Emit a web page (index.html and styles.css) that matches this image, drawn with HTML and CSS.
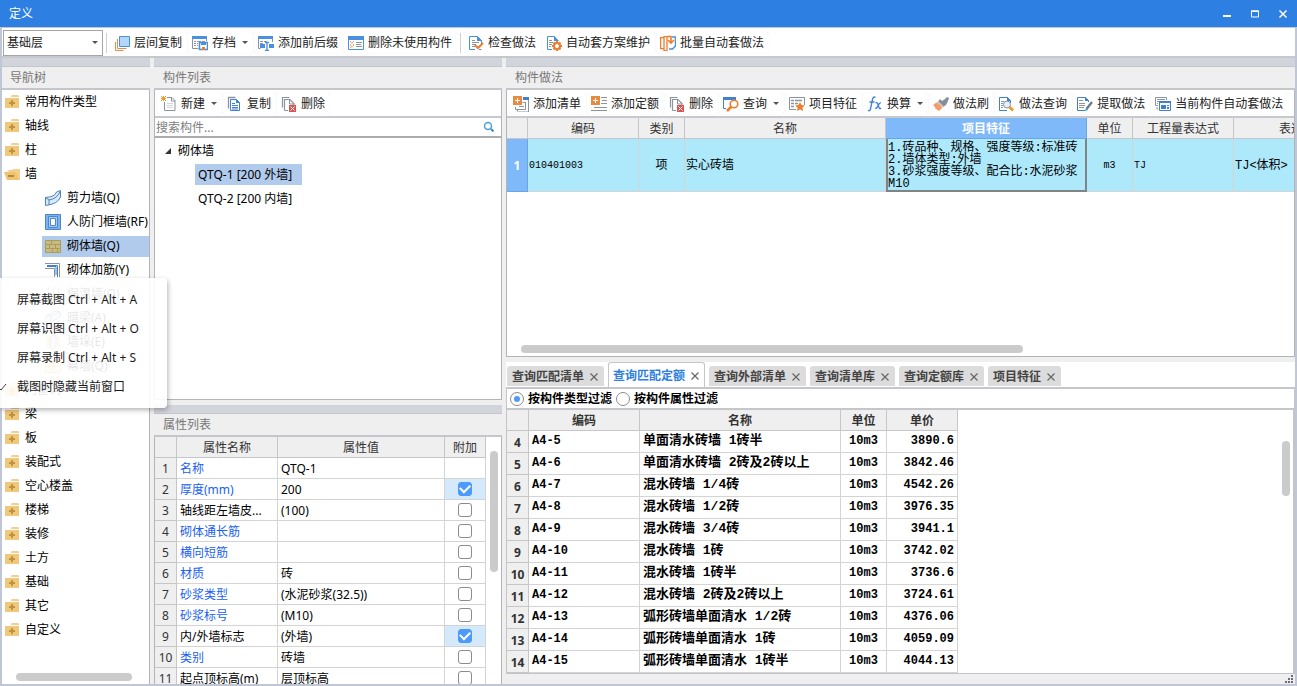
FILE: index.html
```html
<!DOCTYPE html>
<html lang="zh-CN">
<head>
<meta charset="utf-8">
<meta name="viewport" content="width=device-width, initial-scale=1">
<title>定义</title>
<link rel="stylesheet" href="styles.css">
</head>
<body>
<svg class="sprite" aria-hidden="true">
  <symbol id="i-folder" viewBox="0 0 16 16"><path d="M8 1h6l1 1v1H7V2z" fill="#f2cf90"/><path d="M1 4h14v10H1z" fill="#f0c87c"/><path d="M7 6h2v2h2v2H9v2H7v-2H5V8h2z" fill="#bf933f"/></symbol>
  <symbol id="i-open" viewBox="0 0 16 16"><path d="M3 4h5l1-1h7v11h-2z" fill="#f3d08f"/><path d="M0 6h12l3 8H3z" fill="#f0c273"/><path d="M4 9h6v2H4z" fill="#b98a35"/></symbol>
  <symbol id="i-copyfloor" viewBox="0 0 16 16"><path d="M5.5 1.500h10v10h-10z" fill="#b5d6fb" stroke="#4a8fe0"/><path d="M3.500 4v9.500h9M1.500 7v8.500h8" fill="none" stroke="#ec8b4a"/></symbol>
  <symbol id="i-archive" viewBox="0 0 16 16"><path d="M0 1h15v3H0z" fill="#4a8fe0"/><path d="M.5 4v9.500h6M14.500 4v2M2 6.500h2m1 0h4m1 0h3M2 8.500h2m1 0h1M2 10.500h2m1 0h1" fill="none" stroke="#8b949e"/><path d="M7.500 7.500h8v7h-8z" fill="#fff" stroke="#4a8fe0" stroke-width="1.500"/><path d="M9 7h5v3H9z" fill="#4a8fe0"/><path d="M10 12h3v3h-3z" fill="#ee7d2e"/></symbol>
  <symbol id="i-affix" viewBox="0 0 16 16"><path d="M0 1h15v3H0z" fill="#4a8fe0"/><path d="M.5 4v9.500h2M14.500 4v3M2 6.500h3m1 0h3M2 8.500h3" fill="none" stroke="#8b949e"/><path d="M2 9h5v4H2zm9 0h5v4h-5z" fill="#4a8fe0"/><path d="M7 7.500h4M9 8v7M7 15.500h4" fill="none" stroke="#4a8fe0" stroke-width="1.300"/></symbol>
  <symbol id="i-unused" viewBox="0 0 16 16"><path d="M.5 1.500h15v13H.5z" fill="#fff" stroke="#4a8fe0"/><path d="M0 1h16v4H0z" fill="#4a8fe0"/><path d="m2 6 4 4m0-4-4 4m0 0 3 3m1-3-4 3" stroke="#ee7d2e" stroke-dasharray="1 1"/><path d="M8 7.500h6m-6 2h5m-5 2h6" stroke="#8b949e"/></symbol>
  <symbol id="i-check" viewBox="0 0 16 16"><path d="M7 14.500H1.500v-13h8l4 4V9M11 14.500h2.500" fill="#fff" stroke="#4a8fe0"/><path d="M9 1v5h5z" fill="#4a8fe0"/><path d="M4 5.500h3m-3 2h7m-7 2h4m-4 2h3" stroke="#8b949e"/><path d="m7 10 3 3 5-5" fill="none" stroke="#ee7d2e" stroke-width="2"/></symbol>
  <symbol id="i-gear" viewBox="0 0 16 16"><path d="M6 14.500H1.500v-13h7l3 4" fill="#fff" stroke="#4a8fe0"/><path d="M8 1v5h5z" fill="#4a8fe0"/><path d="M3 5.500h3m-3 2h4m-4 2h3m-3 2h2" stroke="#8b949e"/><circle cx="11" cy="11" r="3" fill="#fff" stroke="#ee7d2e" stroke-width="2"/><path d="M11 6v2m0 6v2m-5-5h2m6 0h2M7.500 7.500l1 1m6-1-1 1m-6 6 1-1m6 1-1-1" stroke="#ee7d2e" stroke-width="2"/></symbol>
  <symbol id="i-batch" viewBox="0 0 16 16"><path d="M12 2h3.500v9l-3 3H9" fill="none" stroke="#4a8fe0" stroke-width="1.500"/><path d="M.6 2.600H4v11H.6zM4 1.600h3v14H4z" fill="#fff" stroke="#ee7d2e" stroke-width="1.300"/><path d="M7 1.500h4V7M8 5l3 3 3-3" fill="none" stroke="#ee7d2e" stroke-width="1.600"/></symbol>
  <symbol id="i-new" viewBox="0 0 16 16"><path d="M6 1.500h5l3 3v10H3.500V6" fill="#fff" stroke="#8b949e"/><path d="M10.500 1.500V5H14" fill="none" stroke="#8b949e"/><path d="M6 7.500h6m-6 2h6m-6 2h6" stroke="#d3d6da"/><path d="m0 0 5 5M5 0 0 5M2.500 0v5M0 2.500h5" stroke="#f09a2c"/></symbol>
  <symbol id="i-copy" viewBox="0 0 16 16"><path d="M1.500 12.500v-11h7" fill="none" stroke="#8b949e" stroke-width="1.300"/><path d="M3.500 3.500h6l3 3v8h-9z" fill="#fff" stroke="#3f80d4"/><path d="M9 3v4h4z" fill="#3f80d4"/><path d="M5 7.500h3m-3 2h6m-6 2h6m-6 1.500h6" stroke="#3f80d4"/></symbol>
  <symbol id="i-delete" viewBox="0 0 16 16"><path d="M1.500 11.500v-10h7M3.500 14.500v-11H9l4 4V9M3.500 14.500H7" fill="none" stroke="#8b949e" stroke-width="1.200"/><path d="M8.500 3.500V8H13" fill="none" stroke="#8b949e"/><path d="M8 9h7v7H8z" fill="#d9534f"/><path d="m9.500 10.500 4 4m0-4-4 4" stroke="#fff"/></symbol>
  <symbol id="i-addlist" viewBox="0 0 16 16"><path d="M10 1h6v3h-6z" fill="#3f80d4"/><path d="M15.500 4v12H5M12.500 6v7.500h-10V11M4.500 13v2.500M9.500 6.500h3M6 10.500h5" fill="none" stroke="#8b949e"/><path d="M0 0h9v9H0z" fill="#e88b42"/><path d="M4.500 2v5M2 4.500h5" stroke="#fff"/></symbol>
  <symbol id="i-addquota" viewBox="0 0 16 16"><path d="M10 1.500h6M11 4.500h5M10 7.500h6M3 11.500h13M0 14.500h16" stroke="#8b949e"/><path d="M0 0h9v9H0z" fill="#e88b42"/><path d="M4.500 2v5M2 4.500h5" stroke="#fff"/></symbol>
  <symbol id="i-query" viewBox="0 0 16 16"><path d="M0 1h13v3H0z" fill="#3f80d4"/><path d="M.5 4v8.500H3M12.500 3v2" fill="none" stroke="#3f80d4"/><circle cx="11" cy="8" r="3.800" fill="#fff" stroke="#ee7d2e" stroke-width="1.600"/><path d="m8.500 10.500-4.500 4.500" stroke="#ee7d2e" stroke-width="2.600"/></symbol>
  <symbol id="i-feature" viewBox="0 0 16 16"><path d="M7 13.500H.5v-12h15V9" fill="#fff" stroke="#8b949e"/><path d="M2 4.500h3m1 0h7M2 7.500h3m1 0h3M2 10.500h3" stroke="#8b949e" stroke-width="1.500"/><path d="m11 6 1.500 3 3.300.5-2.400 2.300.6 3.300-3-1.600-3 1.600.6-3.300L6.200 9.500 9.500 9z" fill="#ee7d2e"/></symbol>
  <symbol id="i-fx" viewBox="0 0 16 16"><path d="M8.500 1.500Q6.500 0 5.600 3L3.600 12.500Q3 15.500 1 14.500M2.500 6h5M8.500 7q1.800-1 2.500 1.500l1 3q.5 2 2 .5M14 7q-1.500-.5-2.500 2l-1 1.500Q9.500 13 8 12" fill="none" stroke="#3f80d4" stroke-width="1.300"/></symbol>
  <symbol id="i-brush" viewBox="0 0 16 16"><path d="m12 3 2-2 2 1-1 3-2 4-3 2-5-5 2-3 2 2z" fill="#858f98"/><path d="m5 5 5.500 5-1.500 1.500L3.500 7z" fill="#d6c4ba"/><path d="m3.500 6.500 6 5L6 15l-2-1.500L2.500 13 2 11 0 9z" fill="#f99a69"/></symbol>
  <symbol id="i-docquery" viewBox="0 0 16 16"><path d="M8 14.500H.5v-13h8l3 3V7" fill="#fff" stroke="#3f80d4"/><path d="M8 1v4h4z" fill="#3f80d4"/><path d="M2 5.500h3m-3 2h2m-2 2h2m-2 2h2" stroke="#8b949e"/><circle cx="8" cy="8.500" r="3.500" fill="#e6f0fb" stroke="#8b949e"/><path d="m10.500 11 3.500 3.500" stroke="#f09a2c" stroke-width="3"/></symbol>
  <symbol id="i-extract" viewBox="0 0 16 16"><path d="M8 14.500H.5v-13h8l3 3V6" fill="#fff" stroke="#3f80d4"/><path d="M8 1v4h4z" fill="#3f80d4"/><path d="M2 4.500h4m-4 3h6m-6 2h6m-6 2h5" stroke="#8b949e"/><path d="m15 6-5.500 7" stroke="#6f7a84" stroke-width="2.400"/><path d="m9 12-1 3 3-1" fill="#2ba6b8"/></symbol>
  <symbol id="i-auto" viewBox="0 0 16 16"><path d="M.5 9.500v-8h11V4M.5 9.500H3M2 3.500h8M2 5.500h2M2 7.500h1M2 11v2h1" fill="none" stroke="#8b949e"/><path d="M4.500 5.500h11v9h-11z" fill="#fff" stroke="#3f80d4"/><path d="M4 5h12v2H4z" fill="#3f80d4"/><path d="M6 9h5v4H6zm6 0h2v1h-2zm0 2h2v2h-2z" fill="#3f80d4"/></symbol>
  <symbol id="i-shear" viewBox="0 0 16 16"><path d="M.5 7.500Q10 7 11.500 2L15.500.5V7Q13 14 .5 15.500z" fill="#d9e9fb" stroke="#4c83bd"/><path d="M.5 7.500 4 10q8-1 11.500-9M4 10v5" fill="none" stroke="#4c83bd"/></symbol>
  <symbol id="i-frame" viewBox="0 0 16 16"><path d="M.5.5h15v15H.5z" fill="#7db1f0" stroke="#4a86cf"/><path d="M3.500 2.500h9v11h-9z" fill="#a9cdf8" stroke="#4a86cf"/><path d="M5.500 4.500h5v7h-5z" fill="#fff" stroke="#4a86cf"/></symbol>
  <symbol id="i-brick" viewBox="0 0 16 16"><path d="M.5 2.500h15v12H.5zM.5 6.500h15M.5 10.500h15M6.500 2.500v4m4 0v4m-6-4v4m3 0v4m5-4v4" fill="#c3bb8e" stroke="#b39c45"/></symbol>
  <symbol id="i-rebar" viewBox="0 0 16 16"><path d="M0 1.500h14.500V15M0 6.500h9.500V15" fill="none" stroke="#8b949e"/><path d="M2 3.500h10.500V15M2 4.500h9V13" fill="none" stroke="#3f80d4"/></symbol>
  <symbol id="i-insul" viewBox="0 0 16 16"><path d="M3.500 1v14M8.500 1v14M13.500 1v14" stroke="#3f80d4" stroke-dasharray="3 1"/><path d="M0 10.500h16" stroke="#3f80d4"/></symbol>
  <symbol id="i-beam" viewBox="0 0 16 16"><path d="m1 6 9-5 5 1v5l-9 5-1 3H1zM1 6h5v5M6 6l9-4" fill="#d9e9fb" stroke="#4c83bd"/></symbol>
  <symbol id="i-pier" viewBox="0 0 16 16"><path d="M1 3h4v10H1zm11 0h3v10h-3z" fill="#f3c565"/><path d="M5.500 3.500 8 1.500h3v10L8.500 14h-3z" fill="#d9e9fb" stroke="#4c83bd"/></symbol>
  <symbol id="i-curtain" viewBox="0 0 16 16"><path d="M.5 2.500h15v12H.5zM.5 8.500h15M8.500 2.500v6m-3 0v6" fill="#fde8ba" stroke="#eca63d"/></symbol>
  <symbol id="i-search" viewBox="0 0 12 12"><circle cx="5" cy="5" r="3.500" fill="none" stroke="#4da0d4" stroke-width="1.500"/><path d="m8 8 2.500 2.500" stroke="#3889c4" stroke-width="2"/></symbol>
  <symbol id="i-x" viewBox="0 0 10 10"><path d="m1.500 1.500 7 7m0-7-7 7" stroke="#666" stroke-width="1.200"/></symbol>
</svg>

<header class="titlebar">
  <h1>定义</h1>
  <div class="winbtns">
    <button aria-label="最小化"><svg viewBox="0 0 10 10"><path d="M1 6h8v2H1z" fill="#fff"/></svg></button>
    <button aria-label="最大化"><svg viewBox="0 0 10 10"><path d="M1.500 2h7v6h-7z" fill="none" stroke="#fff"/><path d="M1 1.500h8v1.500H1z" fill="#fff"/></svg></button>
    <button aria-label="关闭"><svg viewBox="0 0 10 10"><path d="m1.500 1.500 7 7m0-7-7 7" stroke="#fff" stroke-width="1.500"/></svg></button>
  </div>
</header>

<div class="frame">
  <div class="toolbar main-toolbar">
    <div class="floor"><select aria-label="楼层"><option>基础层</option></select><i class="caret"></i></div>
    <i class="sep"></i>
    <button><svg><use href="#i-copyfloor"/></svg>层间复制</button>
    <button><svg><use href="#i-archive"/></svg>存档<i class="caret"></i></button>
    <button><svg><use href="#i-affix"/></svg>添加前后缀</button>
    <button><svg><use href="#i-unused"/></svg>删除未使用构件</button>
    <i class="sep"></i>
    <button><svg><use href="#i-check"/></svg>检查做法</button>
    <button><svg><use href="#i-gear"/></svg>自动套方案维护</button>
    <button><svg><use href="#i-batch"/></svg>批量自动套做法</button>
  </div>

  <main class="workspace">
    <nav class="panel nav">
      <div class="grip"></div>
      <h2>导航树</h2>
      <div class="box">
        <ul class="tree">
          <li><svg><use href="#i-folder"/></svg>常用构件类型</li>
          <li><svg><use href="#i-folder"/></svg>轴线</li>
          <li><svg><use href="#i-folder"/></svg>柱</li>
          <li><svg><use href="#i-open"/></svg>墙</li>
          <li class="sub"><span><svg><use href="#i-shear"/></svg>剪力墙(Q)</span></li>
          <li class="sub"><span><svg><use href="#i-frame"/></svg>人防门框墙(RF)</span></li>
          <li class="sub on"><span><svg><use href="#i-brick"/></svg>砌体墙(Q)</span></li>
          <li class="sub"><span><svg><use href="#i-rebar"/></svg>砌体加筋(Y)</span></li>
          <li class="sub"><span><svg><use href="#i-insul"/></svg>保温墙(Q)</span></li>
          <li class="sub"><span><svg><use href="#i-beam"/></svg>暗梁(A)</span></li>
          <li class="sub"><span><svg><use href="#i-pier"/></svg>墙垛(E)</span></li>
          <li class="sub"><span><svg><use href="#i-curtain"/></svg>幕墙(Q)</span></li>
          <li><svg><use href="#i-folder"/></svg>门窗洞</li>
          <li><svg><use href="#i-folder"/></svg>梁</li>
          <li><svg><use href="#i-folder"/></svg>板</li>
          <li><svg><use href="#i-folder"/></svg>装配式</li>
          <li><svg><use href="#i-folder"/></svg>空心楼盖</li>
          <li><svg><use href="#i-folder"/></svg>楼梯</li>
          <li><svg><use href="#i-folder"/></svg>装修</li>
          <li><svg><use href="#i-folder"/></svg>土方</li>
          <li><svg><use href="#i-folder"/></svg>基础</li>
          <li><svg><use href="#i-folder"/></svg>其它</li>
          <li><svg><use href="#i-folder"/></svg>自定义</li>
        </ul>
        <div class="hbar"><i></i></div>
      </div>
    </nav>

    <div class="middle">
      <section class="panel list">
        <div class="grip"></div>
        <h2>构件列表</h2>
        <div class="box">
          <div class="toolbar">
            <button><svg><use href="#i-new"/></svg>新建<i class="caret"></i></button>
            <button><svg><use href="#i-copy"/></svg>复制</button>
            <button><svg><use href="#i-delete"/></svg>删除</button>
          </div>
          <div class="search"><input type="text" aria-label="搜索构件" placeholder="搜索构件..."><svg><use href="#i-search"/></svg></div>
          <ul class="members">
            <li class="root"><i class="tri"></i>砌体墙</li>
            <li class="on"><span>QTQ-1 [200 外墙]</span></li>
            <li><span>QTQ-2 [200 内墙]</span></li>
          </ul>
        </div>
      </section>

      <section class="panel props">
        <div class="grip"></div>
        <h2>属性列表</h2>
        <div class="box">
          <table class="grid prop-grid">
            <colgroup><col class="w22"><col class="w101"><col class="w167"><col class="w41"></colgroup>
            <thead><tr><th></th><th>属性名称</th><th>属性值</th><th>附加</th></tr></thead>
            <tbody>
              <tr><th>1</th><td class="blue">名称</td><td>QTQ-1</td><td></td></tr>
              <tr><th>2</th><td class="blue">厚度(mm)</td><td>200</td><td class="tick"><input type="checkbox" aria-label="厚度 附加" checked></td></tr>
              <tr><th>3</th><td>轴线距左墙皮...</td><td>(100)</td><td><input type="checkbox" aria-label="轴线距左墙皮 附加"></td></tr>
              <tr><th>4</th><td class="blue">砌体通长筋</td><td></td><td><input type="checkbox" aria-label="砌体通长筋 附加"></td></tr>
              <tr><th>5</th><td class="blue">横向短筋</td><td></td><td><input type="checkbox" aria-label="横向短筋 附加"></td></tr>
              <tr><th>6</th><td class="blue">材质</td><td>砖</td><td><input type="checkbox" aria-label="材质 附加"></td></tr>
              <tr><th>7</th><td class="blue">砂浆类型</td><td>(水泥砂浆(32.5))</td><td><input type="checkbox" aria-label="砂浆类型 附加"></td></tr>
              <tr><th>8</th><td class="blue">砂浆标号</td><td>(M10)</td><td><input type="checkbox" aria-label="砂浆标号 附加"></td></tr>
              <tr><th>9</th><td>内/外墙标志</td><td>(外墙)</td><td class="tick"><input type="checkbox" aria-label="内/外墙标志 附加" checked></td></tr>
              <tr><th>10</th><td class="blue">类别</td><td>砖墙</td><td><input type="checkbox" aria-label="类别 附加"></td></tr>
              <tr><th>11</th><td>起点顶标高(m)</td><td>层顶标高</td><td><input type="checkbox" aria-label="起点顶标高 附加"></td></tr>
            </tbody>
          </table>
          <div class="vbar"><i></i></div>
        </div>
      </section>
    </div>

    <div class="right">
      <section class="panel methods">
        <div class="grip"></div>
        <h2>构件做法</h2>
        <div class="box">
          <div class="toolbar">
            <button><svg><use href="#i-addlist"/></svg>添加清单</button>
            <button><svg><use href="#i-addquota"/></svg>添加定额</button>
            <button><svg><use href="#i-delete"/></svg>删除</button>
            <button><svg><use href="#i-query"/></svg>查询<i class="caret"></i></button>
            <button><svg><use href="#i-feature"/></svg>项目特征</button>
            <button><svg><use href="#i-fx"/></svg>换算<i class="caret"></i></button>
            <button><svg><use href="#i-brush"/></svg>做法刷</button>
            <button><svg><use href="#i-docquery"/></svg>做法查询</button>
            <button><svg><use href="#i-extract"/></svg>提取做法</button>
            <button><svg><use href="#i-auto"/></svg>当前构件自动套做法</button>
          </div>
          <div class="sheet">
            <table class="grid method-grid">
              <colgroup><col class="w21"><col class="w111"><col class="w46"><col class="w201"><col class="w201"><col class="w46"><col class="w101"><col class="w151"></colgroup>
              <thead><tr><th></th><th>编码</th><th>类别</th><th>名称</th><th class="cur">项目特征</th><th>单位</th><th>工程量表达式</th><th>表达式说明</th></tr></thead>
              <tbody><tr><th>1</th><td class="code">010401003</td><td class="mid">项</td><td>实心砖墙</td><td class="feature">1.砖品种、规格、强度等级:标准砖<br>2.墙体类型:外墙<br>3.砂浆强度等级、配合比:水泥砂浆<br>M10</td><td class="mid code">m3</td><td class="code">TJ</td><td>TJ&lt;体积&gt;</td></tr></tbody>
            </table>
          </div>
          <div class="hbar"><i></i></div>
        </div>
      </section>

      <section class="lookup">
        <div class="tabs" role="tablist">
          <button role="tab">查询匹配清单<svg><use href="#i-x"/></svg></button>
          <button role="tab" class="on" aria-selected="true">查询匹配定额<svg><use href="#i-x"/></svg></button>
          <button role="tab">查询外部清单<svg><use href="#i-x"/></svg></button>
          <button role="tab">查询清单库<svg><use href="#i-x"/></svg></button>
          <button role="tab">查询定额库<svg><use href="#i-x"/></svg></button>
          <button role="tab">项目特征<svg><use href="#i-x"/></svg></button>
        </div>
        <div class="filters">
          <label><input type="radio" name="filter" checked>按构件类型过滤</label>
          <label><input type="radio" name="filter">按构件属性过滤</label>
        </div>
        <div class="quota">
          <table class="grid quota-grid">
            <colgroup><col class="w22"><col class="w111"><col class="w201"><col class="w46"><col class="w71"></colgroup>
            <thead><tr><th></th><th>编码</th><th>名称</th><th>单位</th><th>单价</th></tr></thead>
            <tbody>
              <tr><th>4</th><td>A4-5</td><td>单面清水砖墙 1砖半</td><td>10m3</td><td>3890.6</td></tr>
              <tr><th>5</th><td>A4-6</td><td>单面清水砖墙 2砖及2砖以上</td><td>10m3</td><td>3842.46</td></tr>
              <tr><th>6</th><td>A4-7</td><td>混水砖墙 1/4砖</td><td>10m3</td><td>4542.26</td></tr>
              <tr><th>7</th><td>A4-8</td><td>混水砖墙 1/2砖</td><td>10m3</td><td>3976.35</td></tr>
              <tr><th>8</th><td>A4-9</td><td>混水砖墙 3/4砖</td><td>10m3</td><td>3941.1</td></tr>
              <tr><th>9</th><td>A4-10</td><td>混水砖墙 1砖</td><td>10m3</td><td>3742.02</td></tr>
              <tr><th>10</th><td>A4-11</td><td>混水砖墙 1砖半</td><td>10m3</td><td>3736.6</td></tr>
              <tr><th>11</th><td>A4-12</td><td>混水砖墙 2砖及2砖以上</td><td>10m3</td><td>3724.61</td></tr>
              <tr><th>12</th><td>A4-13</td><td>弧形砖墙单面清水 1/2砖</td><td>10m3</td><td>4376.06</td></tr>
              <tr><th>13</th><td>A4-14</td><td>弧形砖墙单面清水 1砖</td><td>10m3</td><td>4059.09</td></tr>
              <tr><th>14</th><td>A4-15</td><td>弧形砖墙单面清水 1砖半</td><td>10m3</td><td>4044.13</td></tr>
            </tbody>
          </table>
          <div class="vbar"><i></i></div>
        </div>
        <div class="status"><svg viewBox="0 0 9 9"><path d="M6 0h2v2H6zM3 3h2v2H3zm3 0h2v2H6zM0 6h2v2H0zm3 0h2v2H3zm3 0h2v2H6z" fill="#6b6b76"/></svg></div>
      </section>
    </div>
  </main>
</div>

<ul class="popup" role="menu">
  <li role="menuitem">屏幕截图 Ctrl + Alt + A</li>
  <li role="menuitem">屏幕识图 Ctrl + Alt + O</li>
  <li role="menuitem">屏幕录制 Ctrl + Alt + S</li>
  <li role="menuitemcheckbox" aria-checked="true"><svg viewBox="0 0 8 8"><path d="M0 6 1 7 6 1" fill="none" stroke="#444"/></svg>截图时隐藏当前窗口</li>
</ul>
</body>
</html>
```

FILE: styles.css
```css
* { box-sizing: border-box; }
body {
  margin: 0;
  height: 100vh;
  display: flex;
  flex-direction: column;
  overflow: hidden;
  background: #efefef;
  color: #000;
  font: 12px/16px "Noto Sans", "Noto Sans CJK SC", sans-serif;
}
button, input, select { font: inherit; color: inherit; margin: 0; }
button { border: 0; background: none; padding: 0; }
ul { list-style: none; margin: 0; padding: 0; }
h1, h2 { margin: 0; font-size: 12px; font-weight: 400; }
.sprite { position: absolute; width: 0; height: 0; }

.titlebar {
  flex: none;
  height: 27px;
  display: flex;
  align-items: center;
  justify-content: space-between;
  padding: 0 9px;
  background: #2d7fe2;
  color: #fff;
}
.winbtns { display: flex; gap: 18px; }
.winbtns button { display: flex; }
.winbtns svg { width: 10px; height: 10px; }

.frame {
  flex: 1;
  min-height: 0;
  display: flex;
  flex-direction: column;
  border: solid #bfc7d6;
  border-width: 1px 2px 2px;
}
.toolbar {
  flex: none;
  display: flex;
  align-items: center;
  gap: 1px;
  height: 28px;
  padding: 1px 0 0 2px;
  background: #fff;
  border-bottom: 2px solid #c6c8cd;
  color: #222;
  white-space: nowrap;
}
.toolbar button {
  flex: none;
  height: 21px;
  display: flex;
  align-items: center;
  gap: 4px;
  padding: 0 5px 0 4px;
  border-radius: 3px;
  box-shadow: 0 0 1px #dcdcdc;
}
.toolbar svg { width: 16px; height: 16px; }
.caret {
  width: 6px;
  height: 3px;
  background: #555;
  clip-path: polygon(0 0, 100% 0, 50% 100%);
}
.toolbar button .caret { margin-left: 2px; }
.main-toolbar { height: 30px; padding-left: 1px; }
.sep { width: 1px; height: 20px; margin: 0 2px; background: #cfcfcf; }
.floor { display: grid; align-items: center; }
.floor select {
  grid-area: 1 / 1;
  width: 100px;
  height: 26px;
  padding: 0 3px;
  appearance: none;
  background: #fff;
  border: 1px solid #a5a5a5;
  border-radius: 0;
}
.floor .caret { grid-area: 1 / 1; justify-self: end; margin-right: 5px; }

.workspace { flex: 1; min-height: 0; display: flex; gap: 4px; }
.panel { display: flex; flex-direction: column; min-height: 0; }
.grip { flex: none; height: 8px; background: #d2d4dc; }
.panel h2 {
  flex: none;
  height: 24px;
  padding: 1px 9px 0;
  line-height: 19px;
  border: solid #c4c6cc;
  border-width: 1px 0 2px;
  background: #efefef;
  color: #777;
}
.box {
  flex: 1;
  min-height: 0;
  display: flex;
  flex-direction: column;
  background: #fff;
  border: solid #b4b4b8;
  border-width: 0 1px 1px;
  overflow: hidden;
}
.hbar, .vbar { flex: none; display: flex; }
.hbar i, .vbar i { display: block; border-radius: 4px; background: #cbcbcb; }
.hbar i { height: 8px; }
.vbar i { width: 8px; }

.nav { flex: 0 0 148px; }
.nav .box { border-left: 0; border-bottom: 0; }
.nav h2 { padding-left: 8px; }
.tree { flex: 1; min-height: 0; overflow: hidden; }
.tree li {
  height: 24px;
  display: flex;
  align-items: center;
  gap: 5px;
  padding-left: 2px;
  white-space: nowrap;
}
.tree svg { flex: none; width: 16px; height: 16px; }
.tree .sub { padding-left: 40px; }
.sub span {
  flex: 1;
  height: 21px;
  display: flex;
  align-items: center;
  gap: 6px;
  padding-left: 3px;
}
.sub.on span, .members .on span { background: #b1cbec; }
.nav .hbar { padding: 0 17px 3px 14px; }
.nav .hbar i { flex: 1; }

.middle { flex: 0 0 348px; display: flex; flex-direction: column; gap: 5px; }
.list { flex: 0 1 342px; }
.props { flex: 1 1 0; }
.search {
  flex: none;
  display: flex;
  align-items: center;
  height: 20px;
  border-bottom: 2px solid #adadb0;
  padding-right: 6px;
}
.search input { flex: 1; border: 0; padding: 0 1px; outline: 0; background: none; height: 18px; }
.search input::placeholder { color: #808080; opacity: 1; }
.search svg { width: 12px; height: 12px; }
.members li { height: 24px; display: flex; align-items: center; padding-left: 40px; }
.members span { line-height: 21px; min-width: 107px; padding: 0 3px; }
.members .root { padding: 2px 0 0 10px; gap: 7px; }
.tri { width: 6px; height: 6px; background: #333; clip-path: polygon(100% 0, 100% 100%, 0 100%); }

.grid { flex: none; table-layout: fixed; border-spacing: 0; width: 0; }
.grid th, .grid td {
  height: 21px;
  padding: 2px 3px 0;
  border: solid #d4d4d4;
  border-width: 0 1px 1px 0;
  line-height: 16px;
  text-align: left;
  white-space: nowrap;
  overflow: hidden;
}
.grid th {
  padding: 2px 0 0;
  text-align: center;
  font-weight: 400;
  background: #efefef;
  border-color: #c6c6c9;
  color: #333;
}
.w21 { width: 21px; }
.w22 { width: 22px; }
.w41 { width: 41px; }
.w46 { width: 46px; }
.w71 { width: 71px; }
.w101 { width: 101px; }
.w111 { width: 111px; }
.w151 { width: 151px; }
.w167 { width: 167px; }
.w201 { width: 201px; }

.props .box { flex-direction: row; border-bottom: 0; }
.prop-grid { align-self: flex-start; }
.prop-grid td:last-child { padding: 0; }
.grid .blue { color: #1a5ff0; }
.grid .tick { background: #d5e9fd; }
.props .vbar { flex: 1; justify-content: center; align-items: flex-start; padding: 14px 0 0 0; }
.props .vbar i { height: 121px; }
input[type="checkbox"], input[type="radio"] {
  appearance: none;
  display: grid;
  place-items: center;
  margin: 0 auto;
  width: 14px;
  height: 14px;
  background: #fff;
  border: 1px solid #8c8c8c;
  border-radius: 3px;
}
input[type="checkbox"]:checked { background: #4d9bf8; border-color: #4d9bf8; }
input[type="checkbox"]:checked::after {
  content: "";
  width: 8px;
  height: 5px;
  margin-bottom: 3px;
  border: solid #fff;
  border-width: 0 0 2px 2px;
  transform: rotate(-45deg);
}

.right { flex: 1; min-width: 0; display: flex; flex-direction: column; gap: 5px; }
.methods { flex: 1 1 0; }
.sheet { flex: 1; min-height: 0; overflow: hidden; }
.method-grid tbody th { background: #80b9fa; border-color: #6aa5e8; color: #fff; font-weight: 700; }
.method-grid td {
  height: 53px;
  padding: 2px 1px 0;
  background: #ade9fb;
  font-family: "Liberation Mono", "Noto Sans CJK SC", monospace;
}
.method-grid .code { font-size: 10px; }
.method-grid .mid { text-align: center; }
.method-grid .cur { background: #80b9fa; border-color: #6aa5e8; color: #fff; font-weight: 700; }
.method-grid .feature { padding: 2px 0 0; border: 2px solid #7f8487; border-top: 0; line-height: 12px; }
.methods .hbar { padding: 0 0 3px 14px; }
.methods .hbar i { width: 65%; }

.lookup { flex: none; display: flex; flex-direction: column; }
.tabs {
  display: flex;
  align-items: flex-end;
  gap: 4px;
  height: 27px;
  padding: 0 1px;
  background: #fff;
  border-bottom: 2px solid #c4c6cc;
}
.tabs button {
  height: 20px;
  margin-bottom: 1px;
  display: flex;
  align-items: center;
  gap: 5px;
  padding: 1px 5px 0;
  background: #dcdcdc;
  border-radius: 3px 3px 0 0;
  color: #444;
  font-weight: 700;
}
.tabs svg { width: 10px; height: 10px; }
.tabs .on {
  height: 25px;
  margin: 0;
  padding: 2px 4px 0;
  background: #fff;
  border: 1px solid #c4c6cc;
  border-bottom: 0;
  color: #2d7fe2;
}
.filters {
  display: flex;
  align-items: center;
  gap: 4px;
  height: 21px;
  padding-left: 3px;
  background: #fff;
  border: solid #c4c6cc;
  border-width: 0 1px 2px;
}
.filters label { display: flex; align-items: center; gap: 4px; font-weight: 700; }
.filters input { border-radius: 50%; }
.filters input[type="radio"]:checked::after { content: ""; width: 6px; height: 6px; border-radius: 50%; background: #4d9bf8; }
.quota {
  display: flex;
  justify-content: space-between;
  background: #fff;
  border: solid #c4c4c6;
  border-width: 0 2px 1px 1px;
}
.quota-grid thead th { font-weight: 700; }
.quota-grid tbody th { height: 22px; font-weight: 700; }
.quota-grid td {
  height: 22px;
  padding: 0 3px 2px;
  font: 700 12px/16px "Liberation Mono", "Noto Sans CJK SC", monospace;
}
.quota-grid td:nth-child(3) { font-size: 13px; }
.quota-grid td:nth-child(4) { text-align: center; }
.quota-grid td:last-child { text-align: right; }
.quota .vbar { padding: 31px 3px 0 0; }
.quota .vbar i { height: 55px; }
.status { height: 10px; display: flex; justify-content: flex-end; padding: 1px 1px 0 0; }
.status svg { width: 9px; height: 9px; }

.popup {
  position: absolute;
  left: 0;
  top: 278px;
  min-width: 167px;
  padding: 7px 20px 7px 17px;
  border-radius: 0 4px 4px 0;
  background: rgba(255, 255, 255, 0.9);
  box-shadow: 1px 2px 5px rgba(0, 0, 0, 0.3);
  color: #1a1a1a;
  white-space: nowrap;
}
.popup li { height: 29px; display: flex; align-items: center; }
.popup svg { width: 8px; height: 8px; margin-left: -17px; margin-right: 9px; }
```
